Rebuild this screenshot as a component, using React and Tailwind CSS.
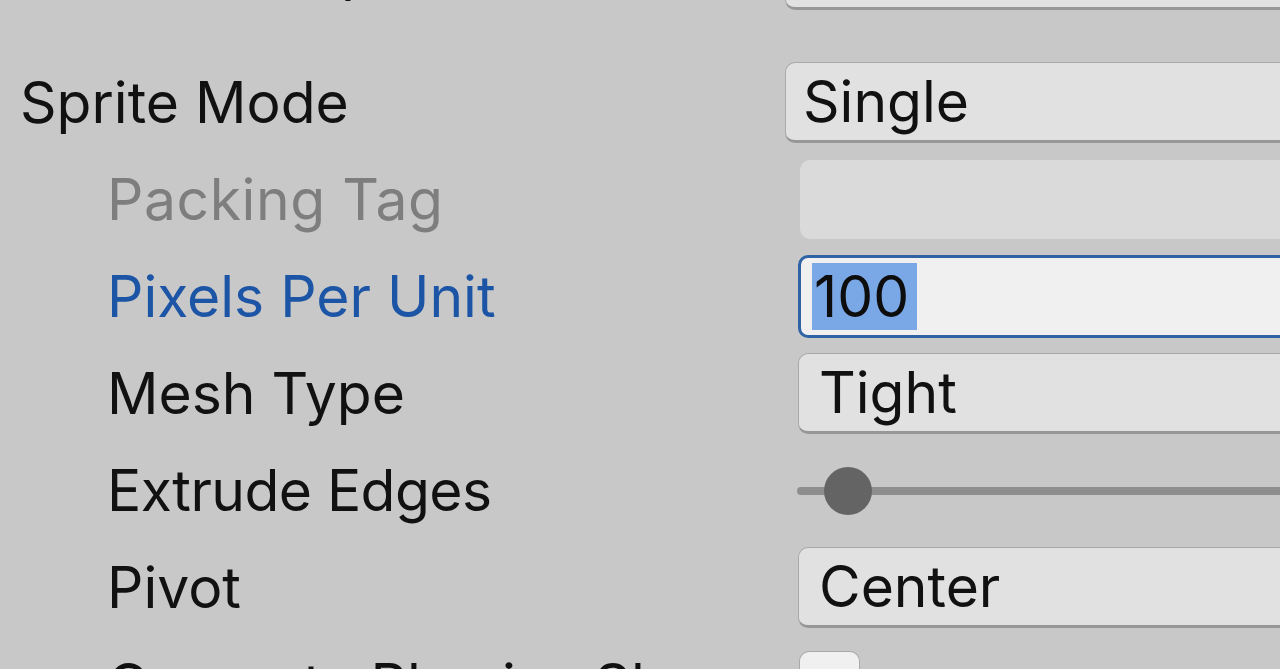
import React from 'react'

// one inspector row: label on the left, control on the right
const Row = ({ label, labelClass = 'text-[#111111]', indent = true, children }) => {
  return (
    <div className="flex h-[97px] items-center">
      <div className={`${indent ? 'pl-[107px]' : 'pl-[20px]'} w-[785px] shrink-0 whitespace-nowrap ${labelClass}`}>
        {label}
      </div>
      <div className="flex h-full flex-1 items-center">{children}</div>
    </div>
  )
}

const Dropdown = ({ value, offset = true }) => (
  <div
    className={`${offset ? 'ml-[13px] pl-[20px]' : 'pl-[17px]'} flex h-[81px] w-[560px] items-center rounded-[10px] border border-[#a9a9a9] border-b-[3px] border-b-[#979797] bg-[#e1e1e1] text-[#111111]`}
  >
    {value}
  </div>
)

const App = () => {
  return (
    <div className="h-[669px] w-[1280px] overflow-hidden bg-[#c8c8c8] font-['Inter','Liberation_Sans',sans-serif] text-[57px] leading-none">
      <div className="mt-[-79px]">
        <Row label="Texture Shape" indent={false}>
          <Dropdown value="" offset={false} />
        </Row>
      </div>

      <div className="h-[36px]" />

      <Row label="Sprite Mode" indent={false}>
        <Dropdown value="Single" offset={false} />
      </Row>

      <Row label="Packing Tag" labelClass="text-[#7e7e7e] tracking-[0.01em]">
        <div className="ml-[15px] h-[79px] w-[560px] rounded-[10px] bg-[#dadada]" />
      </Row>

      <Row label="Pixels Per Unit" labelClass="text-[#1c55a6]">
        <div className="ml-[13px] flex h-[83px] w-[560px] items-center rounded-[10px] border-[3px] border-[#2f63a6] bg-[#f0f0f0] pl-[11px] text-[#0d0d0d]">
          <span className="flex h-[67px] items-center bg-[#7aa7e6] pl-[2px] pr-[8px]">100</span>
        </div>
      </Row>

      <Row label="Mesh Type">
        <Dropdown value="Tight" />
      </Row>

      <Row label="Extrude Edges" labelClass="text-[#111111] tracking-[-0.01em]">
        {/* slider */}
        <div className="relative ml-[12px] flex h-[50px] w-[560px] items-center">
          <div className="h-[8px] w-full rounded-full bg-[#8e8e8e]" />
          <div className="absolute left-[27px] top-[1px] h-[48px] w-[48px] rounded-full bg-[#646464]" />
        </div>
      </Row>

      <Row label="Pivot">
        <Dropdown value="Center" />
      </Row>

      <Row label="Generate Physics Shape">
        <div className="ml-[14px] h-[67px] w-[61px] rounded-[10px] border border-[#a9a9a9] border-b-[3px] border-b-[#979797] bg-[#f0f0f0]" />
      </Row>
    </div>
  )
}

export default App
